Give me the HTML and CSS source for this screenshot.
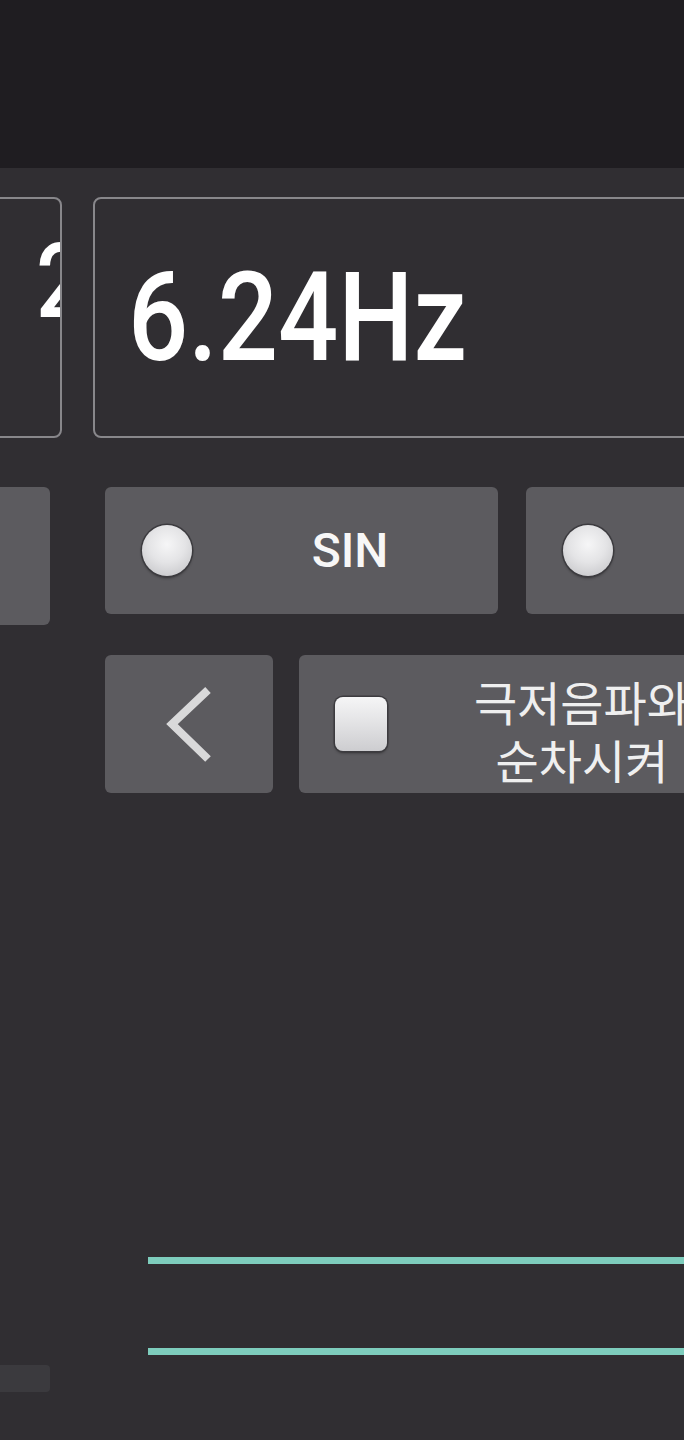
FILE: index.html
```html
<!DOCTYPE html>
<html lang="ko">
<head>
<meta charset="utf-8">
<title>Generator</title>
<link rel="stylesheet" href="styles.css">
</head>
<body>
<div class="page">
  <header class="topbar"></header>

  <section class="display-row">
    <div class="card card-prev"><span class="readout readout-small">2</span></div>
    <div class="card card-main"><span class="readout">6.24Hz</span></div>
  </section>

  <section class="wave-row">
    <div class="btn btn-stub"></div>
    <div class="btn btn-radio">
      <span class="radio"></span>
      <span class="radio-label">SIN</span>
    </div>
    <div class="btn btn-radio">
      <span class="radio"></span>
    </div>
  </section>

  <section class="action-row">
    <div class="btn btn-back">
      <svg class="chevron" width="168" height="138" viewBox="0 0 168 138" aria-hidden="true">
        <polyline points="103,35 67,69 103,104" fill="none" stroke="#d9d9da" stroke-width="8" stroke-linejoin="miter"/>
      </svg>
    </div>
    <div class="btn btn-check">
      <span class="checkbox"></span>
      <span class="check-label">극저음파와<br>순차시켜</span>
    </div>
  </section>

  <section class="chart">
    <div class="trace"></div>
    <div class="trace trace-second"></div>
    <div class="chart-tab"></div>
  </section>
</div>
</body>
</html>
```

FILE: styles.css
```css
html, body {
  margin: 0;
  padding: 0;
  background: #302e32;
  overflow: hidden;
}

.page {
  width: 684px;
  height: 1440px;
  overflow: hidden;
  background: #302e32;
  font-family: Roboto, "Noto Sans", sans-serif;
  color: #ffffff;
}

.topbar {
  height: 168px;
  background: #1f1d21;
}

.display-row {
  display: flex;
  margin-top: 29px;
  height: 241px;
}

.card {
  box-sizing: border-box;
  flex-shrink: 0;
  height: 241px;
  border: 2px solid #88878b;
  border-radius: 8px;
  overflow: hidden;
}

.card-prev {
  width: 200px;
  margin-left: -138px;
  padding-left: 172px;
  padding-top: 22px;
}

.card-main {
  width: 700px;
  margin-left: 31px;
  padding-left: 33px;
  padding-top: 46px;
}

.readout {
  display: inline-block;
  font-family: Roboto, sans-serif;
  font-size: 124px;
  line-height: 145px;
  font-weight: 500;
  color: #ffffff;
  transform: scaleX(0.855);
  transform-origin: left top;
  white-space: nowrap;
}

.readout-small {
  font-size: 104px;
  line-height: 122px;
}

.btn {
  box-sizing: border-box;
  flex-shrink: 0;
  background: #5c5b5f;
  border-radius: 6px;
}

.wave-row {
  display: flex;
  align-items: flex-start;
  margin-top: 49px;
}

.btn-stub {
  width: 50px;
  height: 138px;
  border-radius: 0 6px 6px 0;
}

.btn-radio {
  display: flex;
  align-items: center;
  width: 393px;
  height: 127px;
  padding-left: 37px;
}

.btn-stub + .btn-radio {
  margin-left: 55px;
}

.btn-radio + .btn-radio {
  margin-left: 28px;
}

.radio {
  flex-shrink: 0;
  width: 50px;
  height: 51px;
  border-radius: 50%;
  background: radial-gradient(circle at 50% 38%, #f6f6f7 0%, #e4e4e6 45%, #c9c9cc 85%, #b9b9bc 100%);
  box-shadow: 0 0 0 1.5px #3c3b3f, 0 2px 3px rgba(0, 0, 0, 0.45);
}

.radio-label {
  flex: 1;
  text-align: center;
  padding-left: 10px;
  font-family: Roboto, sans-serif;
  font-size: 48px;
  font-weight: 500;
  color: #f7f7f7;
  white-space: nowrap;
}

.action-row {
  display: flex;
  margin-top: 30px;
  padding-left: 105px;
  gap: 26px;
}

.btn-back {
  width: 168px;
  height: 138px;
}

.chevron {
  display: block;
}

.btn-check {
  display: grid;
  align-items: center;
  width: 566px;
  height: 138px;
}

.checkbox {
  grid-area: 1 / 1;
  justify-self: start;
  margin-left: 36px;
  width: 52px;
  height: 54px;
  border-radius: 8px;
  background: linear-gradient(180deg, #f5f5f6 0%, #e2e2e4 50%, #cdcdd0 100%);
  box-shadow: 0 0 0 1.5px #3c3b3f, 0 2px 3px rgba(0, 0, 0, 0.45);
}

.check-label {
  grid-area: 1 / 1;
  justify-self: center;
  text-align: center;
  padding-top: 12px;
  font-family: "Noto Sans CJK KR", "Noto Sans", sans-serif;
  font-size: 47px;
  line-height: 58px;
  color: #efefef;
  white-space: nowrap;
}

.chart {
  margin-top: 464px;
}

.trace {
  height: 7px;
  margin-left: 148px;
  background: #7ecdbd;
}

.trace-second {
  margin-top: 84px;
}

.chart-tab {
  width: 50px;
  height: 27px;
  margin-top: 10px;
  background: #3b3a3e;
  border-radius: 0 4px 4px 0;
}
```
